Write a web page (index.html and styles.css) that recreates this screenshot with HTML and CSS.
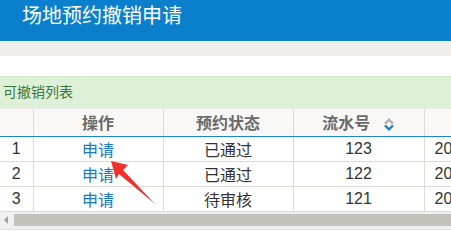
FILE: index.html
```html
<html>

<head>
  <meta charset="utf8">
  <title>场地预约撤销申请</title>
  <link rel="stylesheet" href="styles.css">
</head>

<body>
  <div class="topbar">
    <h1>场地预约撤销申请</h1>
  </div>
  <div class="band"></div>
  <section class="content">
    <div class="panel-heading">可撤销列表</div>
    <div class="grid-wrap">
      <table class="grid">
        <colgroup>
          <col class="col-no">
          <col class="col-op">
          <col class="col-state">
          <col class="col-sn">
          <col class="col-time">
        </colgroup>
        <thead>
          <tr>
            <th></th>
            <th>操作</th>
            <th>预约状态</th>
            <th>流水号
              <svg class="sort" width="12" height="16" viewBox="0 0 12 16">
                <path d="M1 7 L6 2 L11 7 L9 8.5 L6 5.5 L3 8.5 Z" fill="#b0b0b0"/>
                <path d="M1 10 L3 8.8 L6 11.8 L9 8.8 L11 10 L6 15 Z" fill="#1a7fc6"/>
              </svg>
            </th>
            <th></th>
          </tr>
        </thead>
        <tbody>
          <tr>
            <td>1</td>
            <td><a href="#">申请</a></td>
            <td>已通过</td>
            <td>123</td>
            <td class="time">2018-05-21 10:30</td>
          </tr>
          <tr>
            <td>2</td>
            <td><a href="#">申请</a></td>
            <td>已通过</td>
            <td>122</td>
            <td class="time">2018-05-20 09:12</td>
          </tr>
          <tr>
            <td>3</td>
            <td><a href="#">申请</a></td>
            <td>待审核</td>
            <td>121</td>
            <td class="time">2018-05-19 14:45</td>
          </tr>
        </tbody>
      </table>
      <!-- annotation arrow over the table -->
      <svg class="mark" width="60" height="60" viewBox="0 0 60 60">
        <polygon points="6,4 23,8 18,13 50,47 14,17 11,22" fill="#f0302c"/>
      </svg>
    </div>
    <div class="hscroll">
      <span class="hscroll-arrow"></span>
      <div class="hscroll-thumb"></div>
    </div>
  </section>
</body>

</html>
```

FILE: styles.css
```css
* {
  margin: 0;
  padding: 0;
}

body {
  font-family: "Liberation Sans", "Noto Sans CJK SC", sans-serif;
  font-size: 13px;
  color: #333;
  background: #fff;
  overflow: hidden;
}

.topbar {
  height: 41px;
  background-color: #0a80cd;
}

.topbar h1 {
  font-size: 20px;
  font-weight: normal;
  color: #fff;
  line-height: 32px;
  padding-left: 22px;
}

.band {
  height: 15px;
  background-color: #efeeec;
}

.content {
  padding-top: 20px;
}

.panel-heading {
  height: 30px;
  line-height: 30px;
  padding-left: 3px;
  font-size: 14px;
  color: #3c763d;
  background-color: #dff0d8;
  border-top: 1px solid #d6e9c6;
  border-bottom: 1px solid #e4e4e4;
}

.grid-wrap {
  position: relative;
  overflow: hidden;
  border-top: 1px solid #eeeeee;
}

.grid {
  border-collapse: collapse;
  width: 584px;
  table-layout: fixed;
}

.grid .col-no {
  width: 33px;
}

.grid .col-op {
  width: 130px;
}

.grid .col-state {
  width: 130px;
}

.grid .col-sn {
  width: 131px;
}

.grid .col-time {
  width: 160px;
}

.grid th,
.grid td {
  border-right: 1px solid #dedcd6;
  text-align: center;
  white-space: nowrap;
  overflow: hidden;
}

.grid th {
  height: 27px;
  background-color: #f9f8f7;
  color: #6a6a6a;
  font-weight: bold;
  border-bottom: 1px solid #1a86cc;
}

.grid td {
  height: 25px;
  border-bottom: 1px solid #dedcd6;
}

.grid td.time {
  text-align: left;
  padding-left: 10px;
}

.grid a {
  color: #1a78c2;
  text-decoration: none;
}

.sort {
  vertical-align: -3px;
  margin-left: 8px;
}

.mark {
  position: absolute;
  left: 105px;
  top: 48px;
}

.hscroll {
  display: flex;
  align-items: center;
  height: 17px;
  background-color: #f0f0f0;
  border-bottom: 1px solid #e2e2e2;
}

.hscroll-arrow {
  width: 0;
  height: 0;
  margin: 0 6px 0 4px;
  border-top: 4px solid transparent;
  border-bottom: 4px solid transparent;
  border-right: 4px solid #a3a3a3;
}

.hscroll-thumb {
  flex: 1;
  height: 12px;
  background-color: #c3c1bb;
}
```
